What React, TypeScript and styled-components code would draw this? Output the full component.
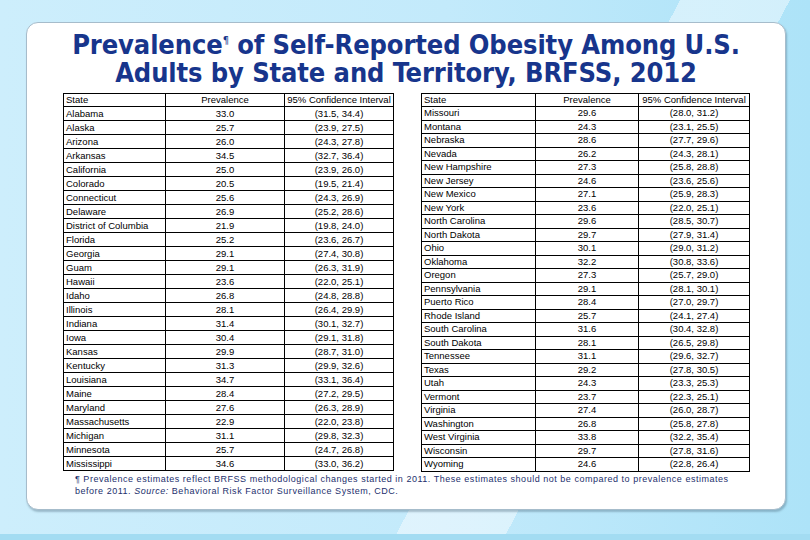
import React from 'react'
import styled, { createGlobalStyle } from 'styled-components'

type Row = [string, string, string]

const leftRows: Row[] = [
  ['Alabama', '33.0', '(31.5, 34.4)'],
  ['Alaska', '25.7', '(23.9, 27.5)'],
  ['Arizona', '26.0', '(24.3, 27.8)'],
  ['Arkansas', '34.5', '(32.7, 36.4)'],
  ['California', '25.0', '(23.9, 26.0)'],
  ['Colorado', '20.5', '(19.5, 21.4)'],
  ['Connecticut', '25.6', '(24.3, 26.9)'],
  ['Delaware', '26.9', '(25.2, 28.6)'],
  ['District of Columbia', '21.9', '(19.8, 24.0)'],
  ['Florida', '25.2', '(23.6, 26.7)'],
  ['Georgia', '29.1', '(27.4, 30.8)'],
  ['Guam', '29.1', '(26.3, 31.9)'],
  ['Hawaii', '23.6', '(22.0, 25.1)'],
  ['Idaho', '26.8', '(24.8, 28.8)'],
  ['Illinois', '28.1', '(26.4, 29.9)'],
  ['Indiana', '31.4', '(30.1, 32.7)'],
  ['Iowa', '30.4', '(29.1, 31.8)'],
  ['Kansas', '29.9', '(28.7, 31.0)'],
  ['Kentucky', '31.3', '(29.9, 32.6)'],
  ['Louisiana', '34.7', '(33.1, 36.4)'],
  ['Maine', '28.4', '(27.2, 29.5)'],
  ['Maryland', '27.6', '(26.3, 28.9)'],
  ['Massachusetts', '22.9', '(22.0, 23.8)'],
  ['Michigan', '31.1', '(29.8, 32.3)'],
  ['Minnesota', '25.7', '(24.7, 26.8)'],
  ['Mississippi', '34.6', '(33.0, 36.2)'],
]

const rightRows: Row[] = [
  ['Missouri', '29.6', '(28.0, 31.2)'],
  ['Montana', '24.3', '(23.1, 25.5)'],
  ['Nebraska', '28.6', '(27.7, 29.6)'],
  ['Nevada', '26.2', '(24.3, 28.1)'],
  ['New Hampshire', '27.3', '(25.8, 28.8)'],
  ['New Jersey', '24.6', '(23.6, 25.6)'],
  ['New Mexico', '27.1', '(25.9, 28.3)'],
  ['New York', '23.6', '(22.0, 25.1)'],
  ['North Carolina', '29.6', '(28.5, 30.7)'],
  ['North Dakota', '29.7', '(27.9, 31.4)'],
  ['Ohio', '30.1', '(29.0, 31.2)'],
  ['Oklahoma', '32.2', '(30.8, 33.6)'],
  ['Oregon', '27.3', '(25.7, 29.0)'],
  ['Pennsylvania', '29.1', '(28.1, 30.1)'],
  ['Puerto Rico', '28.4', '(27.0, 29.7)'],
  ['Rhode Island', '25.7', '(24.1, 27.4)'],
  ['South Carolina', '31.6', '(30.4, 32.8)'],
  ['South Dakota', '28.1', '(26.5, 29.8)'],
  ['Tennessee', '31.1', '(29.6, 32.7)'],
  ['Texas', '29.2', '(27.8, 30.5)'],
  ['Utah', '24.3', '(23.3, 25.3)'],
  ['Vermont', '23.7', '(22.3, 25.1)'],
  ['Virginia', '27.4', '(26.0, 28.7)'],
  ['Washington', '26.8', '(25.8, 27.8)'],
  ['West Virginia', '33.8', '(32.2, 35.4)'],
  ['Wisconsin', '29.7', '(27.8, 31.6)'],
  ['Wyoming', '24.6', '(22.8, 26.4)'],
]

const GlobalStyle = createGlobalStyle`
  html, body {
    margin: 0;
    padding: 0;
  }
`

const Page = styled.div`
  width: 810px;
  height: 540px;
  box-sizing: border-box;
  padding: 22px 24px 30px 26px;
  background:
    linear-gradient(180deg, rgba(255, 255, 255, 0) 0 534px, #a3dcf2 534px 540px),
    linear-gradient(118deg, rgba(255, 255, 255, 0) 0 62%, rgba(255, 255, 255, 0.45) 62% 72%, rgba(255, 255, 255, 0) 72%),
    linear-gradient(90deg, #cdeefc 0%, #c3eafb 55%, #ade3f8 100%);
`

const Card = styled.div`
  width: 760px;
  height: 488px;
  box-sizing: border-box;
  background: #fff;
  border: 1px solid #a6bccb;
  border-radius: 12px;
  box-shadow: 1px 2px 2px rgba(60, 90, 110, 0.35);
  padding: 8px 0 0 36px;
  display: flex;
  flex-direction: column;
`

const Title = styled.h1`
  margin: 0 36px 6px 0;
  font-family: "DejaVu Sans Condensed", "DejaVu Sans", sans-serif;
  font-weight: bold;
  font-size: 27px;
  line-height: 28px;
  letter-spacing: -0.1px;
  color: #17358c;
  text-align: center;

  sup {
    font-size: 11px;
    vertical-align: 10px;
    line-height: 0;
    font-weight: normal;
  }
`

const Tables = styled.div`
  display: flex;
  gap: 27px;
  align-items: flex-start;
`

const Grid = styled.table`
  border-collapse: collapse;
  table-layout: fixed;
  font-family: "Liberation Sans", Arial, sans-serif;
  font-size: 9.5px;
  color: #000;
`

const Tr = styled.tr<{ $h: number }>`
  height: ${p => p.$h}px;
`

const Cell = styled.td<{ $align?: string }>`
  border: 1px solid #000;
  padding: 0 2px;
  line-height: 10px;
  white-space: nowrap;
  overflow: hidden;
  text-align: ${p => p.$align || 'left'};
`

const Note = styled.div`
  margin: 1px 0 0 12px;
  font-family: "Liberation Sans", Arial, sans-serif;
  font-size: 9px;
  line-height: 12px;
  letter-spacing: 0.52px;
  color: #1d2f6d;

  em {
    font-style: italic;
  }
`

const NoteLine = styled.div`
  white-space: nowrap;
`

const DataTable = ({ rows, cols, rowH }: { rows: Row[]; cols: number[]; rowH: number }) => (
  <Grid style={{ width: cols.reduce((a, b) => a + b, 0) }}>
    <colgroup>
      {cols.map((w, i) => (
        <col key={i} style={{ width: w }} />
      ))}
    </colgroup>
    <tbody>
      <Tr $h={13}>
        <Cell>State</Cell>
        <Cell $align="center">Prevalence</Cell>
        <Cell $align="center">95% Confidence Interval</Cell>
      </Tr>
      {rows.map(r => (
        <Tr $h={rowH} key={r[0]}>
          <Cell>{r[0]}</Cell>
          <Cell $align="center">{r[1]}</Cell>
          <Cell $align="center">{r[2]}</Cell>
        </Tr>
      ))}
    </tbody>
  </Grid>
)

const App = () => (
  <>
    <GlobalStyle />
    <Page>
      <Card>
        <Title>
          Prevalence<sup>¶</sup> of Self-Reported Obesity Among U.S.
          <br />
          Adults by State and Territory, BRFSS, 2012
        </Title>
        <Tables>
          <DataTable rows={leftRows} cols={[102, 119, 109]} rowH={14} />
          <DataTable rows={rightRows} cols={[114, 103, 111]} rowH={13.5} />
        </Tables>
        <Note>
          <NoteLine>
            ¶ Prevalence estimates reflect BRFSS methodological changes started in 2011. These estimates should not be compared to prevalence estimates
          </NoteLine>
          <NoteLine>
            before 2011. <em>Source:</em> Behavioral Risk Factor Surveillance System, CDC.
          </NoteLine>
        </Note>
      </Card>
    </Page>
  </>
)

export default App
